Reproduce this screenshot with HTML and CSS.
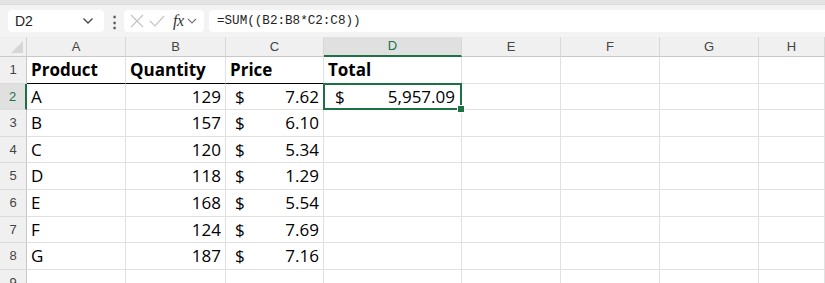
FILE: index.html
```html
<!DOCTYPE html>
<html lang="en">
<head>
  <meta charset="UTF-8">
  <title>Sheet</title>
  <link rel="stylesheet" href="styles.css">
</head>
<body>
  <div class="top-strip"></div>
  <div class="toolbar">
    <div class="name-box">
      <span>D2</span>
      <svg class="chev" width="12" height="8" viewBox="0 0 12 8"><path d="M1.5 1.5 L6 6 L10.5 1.5" fill="none" stroke="#444" stroke-width="1.3"/></svg>
    </div>
    <div class="dots">&#8942;</div>
    <div class="fx-box">
      <svg width="16" height="16" viewBox="0 0 16 16"><path d="M2 2 L14 14 M14 2 L2 14" stroke="#c4c4c4" stroke-width="1.2" fill="none"/></svg>
      <svg width="18" height="16" viewBox="0 0 18 16"><path d="M2 8 L7 13 L16 3" stroke="#c4c4c4" stroke-width="1.2" fill="none"/></svg>
      <span class="fx">fx</span>
      <svg width="10" height="8" viewBox="0 0 10 8"><path d="M1 2 L5 6 L9 2" fill="none" stroke="#777" stroke-width="1.1"/></svg>
    </div>
    <div class="formula">=SUM((B2:B8*C2:C8))</div>
  </div>

  <div class="sheet">
    <div class="corner"><div class="tri"></div></div>
    <div class="col-head">A</div>
    <div class="col-head">B</div>
    <div class="col-head">C</div>
    <div class="col-head active">D</div>
    <div class="col-head">E</div>
    <div class="col-head">F</div>
    <div class="col-head">G</div>
    <div class="col-head">H</div>

    <div class="row-head">1</div>
    <div class="cell bold table-top">Product</div>
    <div class="cell bold table-top">Quantity</div>
    <div class="cell bold table-top">Price</div>
    <div class="cell bold">Total</div>
    <div class="cell"></div><div class="cell"></div><div class="cell"></div><div class="cell"></div>

    <div class="row-head active">2</div>
    <div class="cell">A</div>
    <div class="cell num">129</div>
    <div class="cell money"><span>$</span><span>7.62</span></div>
    <div class="cell money selected"><span>$</span><span>5,957.09</span><i class="handle"></i></div>
    <div class="cell"></div><div class="cell"></div><div class="cell"></div><div class="cell"></div>

    <div class="row-head">3</div>
    <div class="cell">B</div>
    <div class="cell num">157</div>
    <div class="cell money"><span>$</span><span>6.10</span></div>
    <div class="cell"></div><div class="cell"></div><div class="cell"></div><div class="cell"></div><div class="cell"></div>

    <div class="row-head">4</div>
    <div class="cell">C</div>
    <div class="cell num">120</div>
    <div class="cell money"><span>$</span><span>5.34</span></div>
    <div class="cell"></div><div class="cell"></div><div class="cell"></div><div class="cell"></div><div class="cell"></div>

    <div class="row-head">5</div>
    <div class="cell">D</div>
    <div class="cell num">118</div>
    <div class="cell money"><span>$</span><span>1.29</span></div>
    <div class="cell"></div><div class="cell"></div><div class="cell"></div><div class="cell"></div><div class="cell"></div>

    <div class="row-head">6</div>
    <div class="cell">E</div>
    <div class="cell num">168</div>
    <div class="cell money"><span>$</span><span>5.54</span></div>
    <div class="cell"></div><div class="cell"></div><div class="cell"></div><div class="cell"></div><div class="cell"></div>

    <div class="row-head">7</div>
    <div class="cell">F</div>
    <div class="cell num">124</div>
    <div class="cell money"><span>$</span><span>7.69</span></div>
    <div class="cell"></div><div class="cell"></div><div class="cell"></div><div class="cell"></div><div class="cell"></div>

    <div class="row-head">8</div>
    <div class="cell">G</div>
    <div class="cell num">187</div>
    <div class="cell money"><span>$</span><span>7.16</span></div>
    <div class="cell"></div><div class="cell"></div><div class="cell"></div><div class="cell"></div><div class="cell"></div>

    <div class="row-head">9</div>
    <div class="cell"></div><div class="cell"></div><div class="cell"></div><div class="cell"></div>
    <div class="cell"></div><div class="cell"></div><div class="cell"></div><div class="cell"></div>
  </div>
</body>
</html>
```

FILE: styles.css
```css
body {
  margin: 0;
  font-family: "Open Sans", Arial, sans-serif;
  background-color: #f3f3f3;
  overflow: hidden;
  height: 283px;
}

.top-strip {
  height: 4px;
  background-color: #e4e4e4;
  border-bottom: 1px solid #dcdcdc;
}

.toolbar {
  display: flex;
  align-items: center;
  height: 31px;
  padding: 0 0 0 8px;
  background-color: #f3f3f3;
}

.name-box {
  display: flex;
  align-items: center;
  justify-content: space-between;
  width: 96px;
  height: 22px;
  padding: 0 10px 0 7px;
  box-sizing: border-box;
  background-color: white;
  border-radius: 4px;
  font-family: "Liberation Sans", Arial, sans-serif;
  font-size: 14px;
  color: #222;
}

.dots {
  width: 20px;
  text-align: center;
  font-size: 15px;
  font-weight: bold;
  color: #555;
}

.fx-box {
  display: flex;
  align-items: center;
  gap: 3px;
  width: 80px;
  height: 22px;
  padding-left: 5px;
  box-sizing: border-box;
  background-color: white;
  border-radius: 4px;
}

.fx {
  font-family: "Liberation Serif", "Times New Roman", serif;
  font-style: italic;
  font-size: 16px;
  color: #333;
  margin-left: 4px;
  letter-spacing: -0.5px;
}

.formula {
  flex: 1;
  height: 22px;
  margin-left: 5px;
  padding-left: 8px;
  background-color: white;
  border-radius: 4px 0 0 4px;
  font-family: "Liberation Mono", "Courier New", monospace;
  font-size: 12.6px;
  line-height: 22px;
  color: #222;
}

.sheet {
  display: grid;
  grid-template-columns: 27px 99px 100px 98px 138px 99px 99px 99px 1fr;
  grid-template-rows: 20px repeat(9, 26.6px);
  background-color: white;
  margin-top: 1px;
}

.corner {
  background-color: #f0f0f0;
  border-right: 1px solid #d4d4d4;
  border-bottom: 1px solid #c8c8c8;
  position: relative;
}

.tri {
  position: absolute;
  right: 3px;
  bottom: 3px;
  width: 0;
  height: 0;
  border-left: 12px solid transparent;
  border-bottom: 12px solid #d6d6d6;
}

.col-head {
  background-color: #f0f0f0;
  border-right: 1px solid #d8d8d8;
  border-bottom: 1px solid #c8c8c8;
  text-align: center;
  font-family: "Liberation Sans", Arial, sans-serif;
  font-size: 13px;
  line-height: 19px;
  color: #444;
}

.col-head.active {
  background-color: #e0e0e0;
  border-bottom: 2px solid #1e7145;
  color: #1e7145;
  line-height: 18px;
}

.row-head {
  background-color: #f0f0f0;
  border-right: 1px solid #c8c8c8;
  border-bottom: 1px solid #dcdcdc;
  text-align: center;
  font-family: "Liberation Sans", Arial, sans-serif;
  font-size: 13px;
  line-height: 26px;
  color: #444;
}

.row-head.active {
  background-color: #e0e0e0;
  border-right: 2px solid #1e7145;
  color: #1e7145;
}

.cell {
  border-right: 1px solid #e1e1e1;
  border-bottom: 1px solid #e1e1e1;
  padding: 0 4px;
  font-size: 17px;
  line-height: 26px;
  color: #000;
  white-space: nowrap;
  overflow: visible;
}

.bold {
  font-weight: 700;
}

.table-top {
  border-bottom-color: #000;
}

.num {
  text-align: right;
}

.money {
  display: flex;
  justify-content: space-between;
  padding: 0 4px 0 9px;
}

.selected {
  position: relative;
  border: 2px solid #1e7145;
  margin: -1px 0 0 -1px;
  padding: 0 5px 0 10px;
  line-height: 23px;
}

.handle {
  position: absolute;
  right: -5px;
  bottom: -5px;
  width: 6px;
  height: 6px;
  background-color: #1e7145;
  border: 1px solid white;
}
```
